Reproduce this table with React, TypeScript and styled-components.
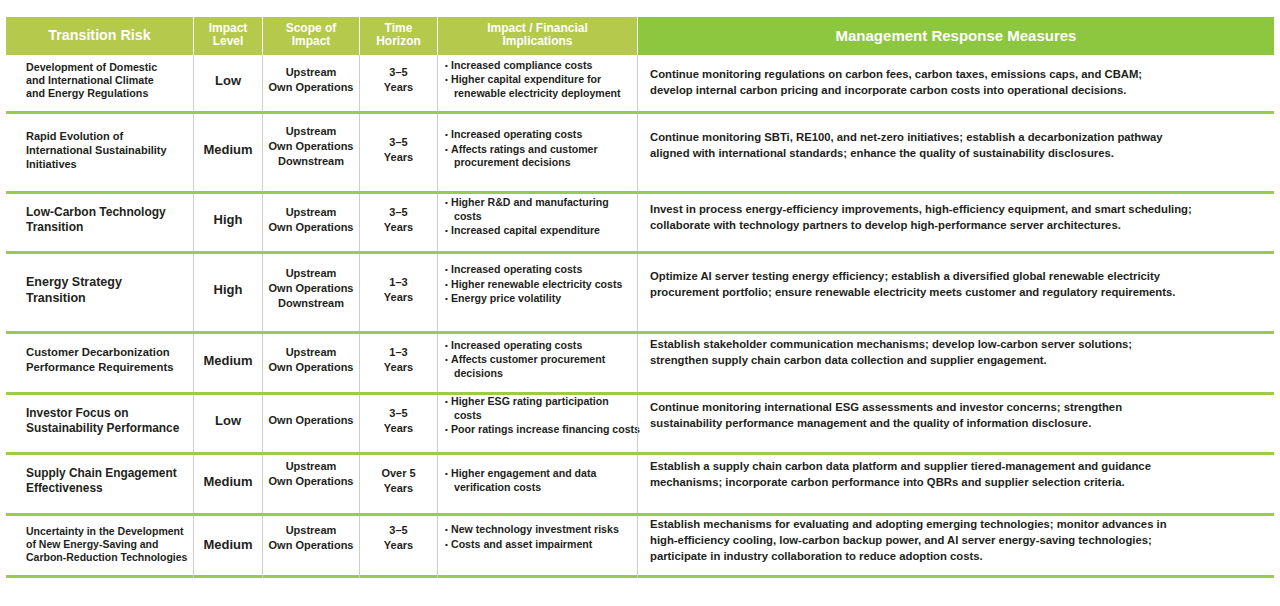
import styled, { createGlobalStyle } from 'styled-components'

const COLS = '187px 69px 97px 78px 200px 1fr'

const GlobalStyle = createGlobalStyle`
  body {
    margin: 0;
    background: #fff;
    font-family: 'Liberation Sans', Arial, Helvetica, sans-serif;
    color: #231f20;
  }
`

const Table = styled.div`
  width: 1268px;
  margin: 17px 0 0 6px;
`

const HeaderRow = styled.div`
  display: grid;
  grid-template-columns: ${COLS};
  height: 38px;
`

const HeadCell = styled.div<{ $main?: boolean; $size?: number; $first?: boolean }>`
  display: flex;
  align-items: center;
  justify-content: center;
  text-align: center;
  background: ${(p) => (p.$main ? '#8dc63f' : '#b5c94c')};
  border-left: ${(p) => (p.$first ? 'none' : '1px solid #fff')};
  color: #fff;
  font-weight: bold;
  font-size: ${(p) => p.$size ?? 12}px;
  line-height: 13px;
  padding-bottom: 2px;
`

const Row = styled.div<{ $h: number }>`
  display: grid;
  grid-template-columns: ${COLS};
  height: ${(p) => p.$h}px;
  box-sizing: border-box;
  border-bottom: 3px solid #9ccb4b;
`

const Cell = styled.div<{ $lift?: number }>`
  display: flex;
  align-items: center;
  border-left: 1px solid #cdcdcd;
  font-weight: bold;
  padding-bottom: ${(p) => (p.$lift ?? 3) * 2}px;
`

const RiskCell = styled(Cell)<{ $size: number; $lh: number }>`
  border-left: none;
  padding-left: 20px;
  padding-right: 4px;
  font-size: ${(p) => p.$size}px;
  line-height: ${(p) => p.$lh}px;
`

const LevelCell = styled(Cell)`
  justify-content: center;
  font-size: 13px;
`

const CenterCell = styled(Cell)`
  justify-content: center;
  text-align: center;
  font-size: 11px;
  line-height: 15px;
`

const ImpactCell = styled(Cell)`
  padding-left: 7px;
  font-size: 10.6px;
  line-height: 13.5px;
  white-space: nowrap;
  overflow: visible;
`

const BulletList = styled.ul`
  list-style: none;
  margin: 0;
  padding: 0;
`

const Bullet = styled.li`
  display: flex;
  margin: 0 0 1px;
`

const Dot = styled.span`
  flex: none;
  width: 6px;
  font-size: 8px;
`

const Wrapped = styled.div`
  padding-left: 3px;
`

const ResponseCell = styled(Cell)`
  padding-left: 12px;
  font-size: 11.3px;
  line-height: 16px;
`

type Risk = {
  title: string[]
  size: number
  lh: number
  level: string
  scope: string[]
  time: string[]
  impacts: string[][]
  response: string[]
  h: number
  lift: { scope?: number; time?: number; impact?: number; response: number }
}

const risks: Risk[] = [
  {
    title: ['Development of Domestic', 'and International Climate', 'and Energy Regulations'],
    size: 10.7,
    lh: 13,
    level: 'Low',
    scope: ['Upstream', 'Own Operations'],
    time: ['3–5', 'Years'],
    impacts: [['Increased compliance costs'], ['Higher capital expenditure for', 'renewable electricity deployment']],
    response: [
      'Continue monitoring regulations on carbon fees, carbon taxes, emissions caps, and CBAM;',
      'develop internal carbon pricing and incorporate carbon costs into operational decisions.'
    ],
    h: 59,
    lift: { response: 1 }
  },
  {
    title: ['Rapid Evolution of', 'International Sustainability', 'Initiatives'],
    size: 11,
    lh: 14,
    level: 'Medium',
    scope: ['Upstream', 'Own Operations', 'Downstream'],
    time: ['3–5', 'Years'],
    impacts: [['Increased operating costs'], ['Affects ratings and customer', 'procurement decisions']],
    response: [
      'Continue monitoring SBTi, RE100, and net-zero initiatives; establish a decarbonization pathway',
      'aligned with international standards; enhance the quality of sustainability disclosures.'
    ],
    h: 80,
    lift: { scope: 6, response: 7.5 }
  },
  {
    title: ['Low-Carbon Technology', 'Transition'],
    size: 12,
    lh: 15,
    level: 'High',
    scope: ['Upstream', 'Own Operations'],
    time: ['3–5', 'Years'],
    impacts: [['Higher R&D and manufacturing', 'costs'], ['Increased capital expenditure']],
    response: [
      'Invest in process energy-efficiency improvements, high-efficiency equipment, and smart scheduling;',
      'collaborate with technology partners to develop high-performance server architectures.'
    ],
    h: 60,
    lift: { impact: 5, response: 5.5 }
  },
  {
    title: ['Energy Strategy', 'Transition'],
    size: 12.5,
    lh: 16,
    level: 'High',
    scope: ['Upstream', 'Own Operations', 'Downstream'],
    time: ['1–3', 'Years'],
    impacts: [['Increased operating costs'], ['Higher renewable electricity costs'], ['Energy price volatility']],
    response: [
      'Optimize AI server testing energy efficiency; establish a diversified global renewable electricity',
      'procurement portfolio; ensure renewable electricity meets customer and regulatory requirements.'
    ],
    h: 80,
    lift: { scope: 4.5, impact: 7.5, response: 8.5 }
  },
  {
    title: ['Customer Decarbonization', 'Performance Requirements'],
    size: 11.3,
    lh: 15,
    level: 'Medium',
    scope: ['Upstream', 'Own Operations'],
    time: ['1–3', 'Years'],
    impacts: [['Increased operating costs'], ['Affects customer procurement', 'decisions']],
    response: [
      'Establish stakeholder communication mechanisms; develop low-carbon server solutions;',
      'strengthen supply chain carbon data collection and supplier engagement.'
    ],
    h: 61,
    lift: { response: 11 }
  },
  {
    title: ['Investor Focus on', 'Sustainability Performance'],
    size: 11.9,
    lh: 15,
    level: 'Low',
    scope: ['Own Operations'],
    time: ['3–5', 'Years'],
    impacts: [['Higher ESG rating participation', 'costs'], ['Poor ratings increase financing costs']],
    response: [
      'Continue monitoring international ESG assessments and investor concerns; strengthen',
      'sustainability performance management and the quality of information disclosure.'
    ],
    h: 60,
    lift: { impact: 7, response: 8.5 }
  },
  {
    title: ['Supply Chain Engagement', 'Effectiveness'],
    size: 11.9,
    lh: 15,
    level: 'Medium',
    scope: ['Upstream', 'Own Operations'],
    time: ['Over 5', 'Years'],
    impacts: [['Higher engagement and data', 'verification costs']],
    response: [
      'Establish a supply chain carbon data platform and supplier tiered-management and guidance',
      'mechanisms; incorporate carbon performance into QBRs and supplier selection criteria.'
    ],
    h: 61,
    lift: { scope: 10, response: 10 }
  },
  {
    title: ['Uncertainty in the Development', 'of New Energy-Saving and', 'Carbon-Reduction Technologies'],
    size: 10.5,
    lh: 13,
    level: 'Medium',
    scope: ['Upstream', 'Own Operations'],
    time: ['3–5', 'Years'],
    impacts: [['New technology investment risks'], ['Costs and asset impairment']],
    response: [
      'Establish mechanisms for evaluating and adopting emerging technologies; monitor advances in',
      'high-efficiency cooling, low-carbon backup power, and AI server energy-saving technologies;',
      'participate in industry collaboration to reduce adoption costs.'
    ],
    h: 62,
    lift: { scope: 10, time: 10, impact: 10, response: 7.5 }
  }
]

const Lines = ({ lines }: { lines: string[] }) => (
  <div>
    {lines.map((line, index) => (
      <div key={index}>{line}</div>
    ))}
  </div>
)

const App = () => (
  <>
    <GlobalStyle />
    <Table>
      <HeaderRow>
        <HeadCell $first $size={14.3}>Transition Risk</HeadCell>
        <HeadCell>
          Impact
          <br />
          Level
        </HeadCell>
        <HeadCell>
          Scope of
          <br />
          Impact
        </HeadCell>
        <HeadCell>
          Time
          <br />
          Horizon
        </HeadCell>
        <HeadCell>
          Impact / Financial
          <br />
          Implications
        </HeadCell>
        <HeadCell $main $size={15}>
          Management Response Measures
        </HeadCell>
      </HeaderRow>
      {risks.map((risk, index) => (
        <Row key={index} $h={risk.h}>
          <RiskCell $size={risk.size} $lh={risk.lh}>
            <Lines lines={risk.title} />
          </RiskCell>
          <LevelCell>{risk.level}</LevelCell>
          <CenterCell $lift={risk.lift.scope}>
            <Lines lines={risk.scope} />
          </CenterCell>
          <CenterCell $lift={risk.lift.time}>
            <Lines lines={risk.time} />
          </CenterCell>
          <ImpactCell $lift={risk.lift.impact}>
            <BulletList>
              {risk.impacts.map((item, i) => (
                <Bullet key={i}>
                  <Dot>•</Dot>
                  <div>
                    <div>{item[0]}</div>
                    {item.slice(1).map((line, j) => (
                      <Wrapped key={j}>{line}</Wrapped>
                    ))}
                  </div>
                </Bullet>
              ))}
            </BulletList>
          </ImpactCell>
          <ResponseCell $lift={risk.lift.response}>
            <Lines lines={risk.response} />
          </ResponseCell>
        </Row>
      ))}
    </Table>
  </>
)

export default App
